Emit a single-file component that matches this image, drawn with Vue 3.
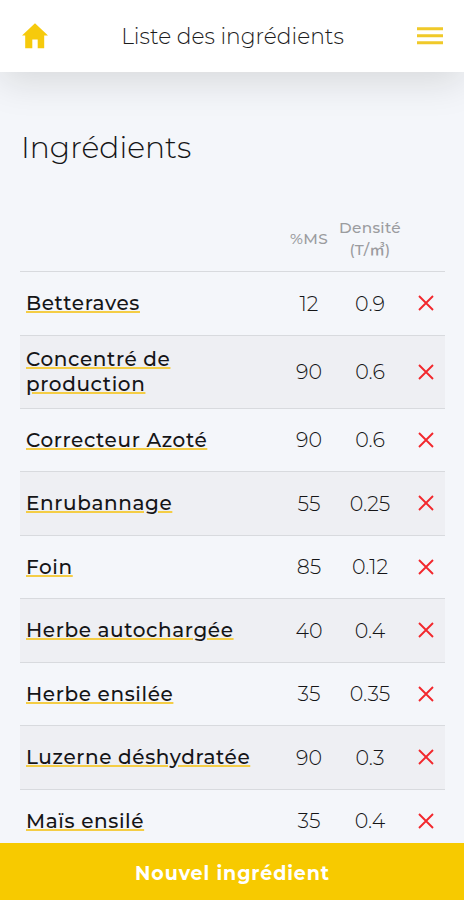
<script setup>
const ingredients = [
  { name: 'Betteraves', ms: '12', density: '0.9' },
  { name: 'Concentré de production', ms: '90', density: '0.6' },
  { name: 'Correcteur Azoté', ms: '90', density: '0.6' },
  { name: 'Enrubannage', ms: '55', density: '0.25' },
  { name: 'Foin', ms: '85', density: '0.12' },
  { name: 'Herbe autochargée', ms: '40', density: '0.4' },
  { name: 'Herbe ensilée', ms: '35', density: '0.35' },
  { name: 'Luzerne déshydratée', ms: '90', density: '0.3' },
  { name: 'Maïs ensilé', ms: '35', density: '0.4' },
]
</script>

<template>
  <div class="screen">
    <header class="topbar">
      <button class="icon-btn" aria-label="Accueil">
        <svg width="26" height="26" viewBox="0 0 26 26"><path fill="#f6ca0c" d="M13 0.3 26 12.4H22.2V25.2H15.7V16.4H10.3V25.2H3.2V12.4H0z" /></svg>
      </button>
      <div class="topbar-title">Liste des ingrédients</div>
      <button class="icon-btn" aria-label="Menu">
        <svg width="26" height="20" viewBox="0 0 26 20"><path fill="#f0c929" d="M0 1.2h26v3H0zM0 8.3h26v3H0zM0 15.3h26v3H0z" /></svg>
      </button>
    </header>
    <main class="content">
      <h1>Ingrédients</h1>
      <div class="table">
        <div class="row head">
          <div></div>
          <div>%MS</div>
          <div>Densité<br />(T/㎥)</div>
          <div></div>
        </div>
        <div v-for="item in ingredients" :key="item.name" class="row item">
          <div class="name"><a>{{ item.name }}</a></div>
          <div class="num">{{ item.ms }}</div>
          <div class="num">{{ item.density }}</div>
          <button class="icon-btn remove" aria-label="Supprimer">
            <svg width="16" height="16" viewBox="0 0 16 16"><path d="M1 1 15 15M15 1 1 15" stroke="#f2282d" stroke-width="1.9" fill="none" /></svg>
          </button>
        </div>
      </div>
    </main>
    <button class="create">Nouvel ingrédient</button>
  </div>
</template>

<style>
body {
  background: #f4f6fa;
}
</style>

<style scoped>
.screen {
  height: 900px;
  display: flex;
  flex-direction: column;
  overflow: hidden;
  background: #f4f6fa;
  font-family: Montserrat, Inter, "Noto Sans CJK JP", sans-serif;
  color: #151517;
}
button {
  border: 0;
  padding: 0;
  background: none;
  font-family: inherit;
}
.icon-btn {
  display: flex;
  align-items: center;
  justify-content: center;
}
.topbar {
  flex: none;
  z-index: 1;
  height: 72px;
  box-sizing: border-box;
  padding: 0 21px 0 22px;
  display: flex;
  align-items: center;
  justify-content: space-between;
  background: #fff;
  box-shadow: 0 9px 38px rgba(20, 20, 0, 0.13);
}
.topbar-title {
  padding-bottom: 1px;
  font-size: 21.75px;
  font-weight: 300;
  color: #1c1c1c;
  white-space: nowrap;
}
.content {
  flex: 1;
  min-height: 0;
  overflow: hidden;
  padding: 0 19px 0 20px;
}
h1 {
  margin: 57px 0 0 1px;
  font-size: 29.8px;
  line-height: 36px;
  font-weight: 300;
}
.table {
  margin-top: 42px;
}
.row {
  display: grid;
  grid-template-columns: 259px 60px 62px 44px;
  align-items: center;
  text-align: center;
  box-sizing: border-box;
}
.head {
  height: 64px;
  font-size: 15.3px;
  line-height: 22px;
  font-weight: 500;
  color: #9b9c9f;
  letter-spacing: 0.3px;
}
.item {
  min-height: 63.5px;
  border-top: 1.5px solid #d8dade;
}
.item:nth-child(odd) {
  background: #eeeff3;
}
.name {
  padding: 11px 0 10px 6px;
  text-align: left;
  font-size: 20px;
  line-height: 25.5px;
  font-weight: 500;
  letter-spacing: 0.62px;
}
.name a {
  text-decoration: underline;
  text-decoration-color: #f4cd45;
  text-decoration-thickness: 2px;
  text-underline-offset: 1px;
}
.num {
  font-size: 20.6px;
  font-weight: 300;
}
.remove {
  padding-left: 5px;
}
.create {
  flex: none;
  height: 57.5px;
  padding: 4px 0 0 1px;
  background: #f7ca00;
  color: #fff;
  font-size: 19px;
  font-weight: 700;
  letter-spacing: 0.9px;
}
</style>
